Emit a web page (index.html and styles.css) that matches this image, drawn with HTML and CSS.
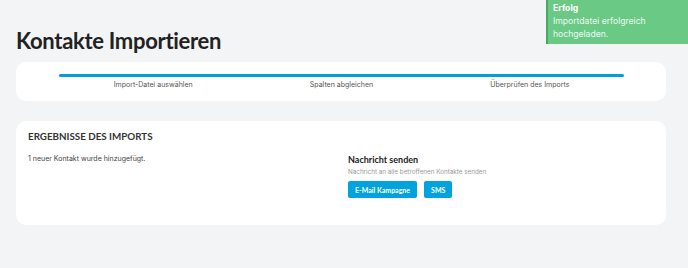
FILE: index.html
```html
<!DOCTYPE html>
<html lang="de">
<head>
  <meta charset="UTF-8">
  <meta name="viewport" content="width=device-width, initial-scale=1.0">
  <title>Kontakte Importieren</title>
  <link rel="stylesheet" href="styles.css">
</head>
<body>
  <div class="toast">
    <div class="toast-title">Erfolg</div>
    <div class="toast-text">Importdatei erfolgreich hochgeladen.</div>
  </div>

  <h1>Kontakte Importieren</h1>

  <div class="card steps">
    <div class="step">
      <div class="bar"></div>
      <span>Import-Datei auswählen</span>
    </div>
    <div class="step">
      <div class="bar"></div>
      <span>Spalten abgleichen</span>
    </div>
    <div class="step">
      <div class="bar"></div>
      <span>Überprüfen des Imports</span>
    </div>
  </div>

  <div class="card results">
    <h2>Ergebnisse des Imports</h2>
    <div class="results-body">
      <p class="summary">1 neuer Kontakt wurde hinzugefügt.</p>
      <div class="message">
        <h3>Nachricht senden</h3>
        <p class="hint">Nachricht an alle betroffenen Kontakte senden</p>
        <div class="actions">
          <button>E-Mail Kampagne</button>
          <button>SMS</button>
        </div>
      </div>
    </div>
  </div>
</body>
</html>
```

FILE: styles.css
```css
body {
  margin: 0;
  padding: 0 22px 0 16px;
  background-color: #f3f4f6;
  font-family: Inter, "Liberation Sans", Arial, sans-serif;
  color: #333;
}
h1 {
  margin: 0;
  padding-top: 27px;
  height: 35px;
  font-family: Lato, sans-serif;
  font-size: 22px;
  font-weight: 700;
  color: #222;
  letter-spacing: -0.3px;
}
.card {
  background-color: #fff;
  border-radius: 10px;
}
.steps {
  display: flex;
  padding: 12px 42px 0 43px;
  height: 27px;
  margin-bottom: 20px;
}
.step {
  flex: 1;
  text-align: center;
  font-size: 7px;
  color: #555;
}
.bar {
  height: 3px;
  background-color: #00a0dc;
  margin-bottom: 3px;
}
.step:first-child .bar {
  border-radius: 2px 0 0 2px;
}
.step:last-child .bar {
  border-radius: 0 2px 2px 0;
}
.results {
  padding: 9px 12px 0 12px;
  height: 95px;
}
h2 {
  margin: 0 0 12px 0;
  font-family: Lato, sans-serif;
  font-size: 9.8px;
  font-weight: 700;
  text-transform: uppercase;
  color: #333;
}
.results-body {
  display: flex;
}
.summary {
  width: 320px;
  margin: 0;
  font-size: 7px;
  color: #444;
}
.message h3 {
  margin: 0 0 3px 0;
  font-family: Lato, sans-serif;
  font-size: 9px;
  font-weight: 700;
  color: #222;
}
.hint {
  margin: 0 0 5px 0;
  font-size: 6.3px;
  color: #999;
}
.actions {
  display: flex;
  gap: 7px;
}
button {
  height: 17px;
  padding: 0 7px;
  background-color: #00a3dd;
  color: #fff;
  border: none;
  border-radius: 2px;
  font-family: Lato, sans-serif;
  font-size: 7px;
  font-weight: 700;
}
.toast {
  position: absolute;
  top: 0;
  right: 0;
  width: 135px;
  height: 42px;
  padding: 2px 0 0 5px;
  background-color: #69c985;
  border-left: 2px solid #4aa866;
  color: #fff;
  font-size: 8.6px;
  line-height: 13px;
}
.toast-title {
  font-weight: 700;
}
.toast-text {
  padding-right: 30px;
  color: #eefaf1;
}
```
